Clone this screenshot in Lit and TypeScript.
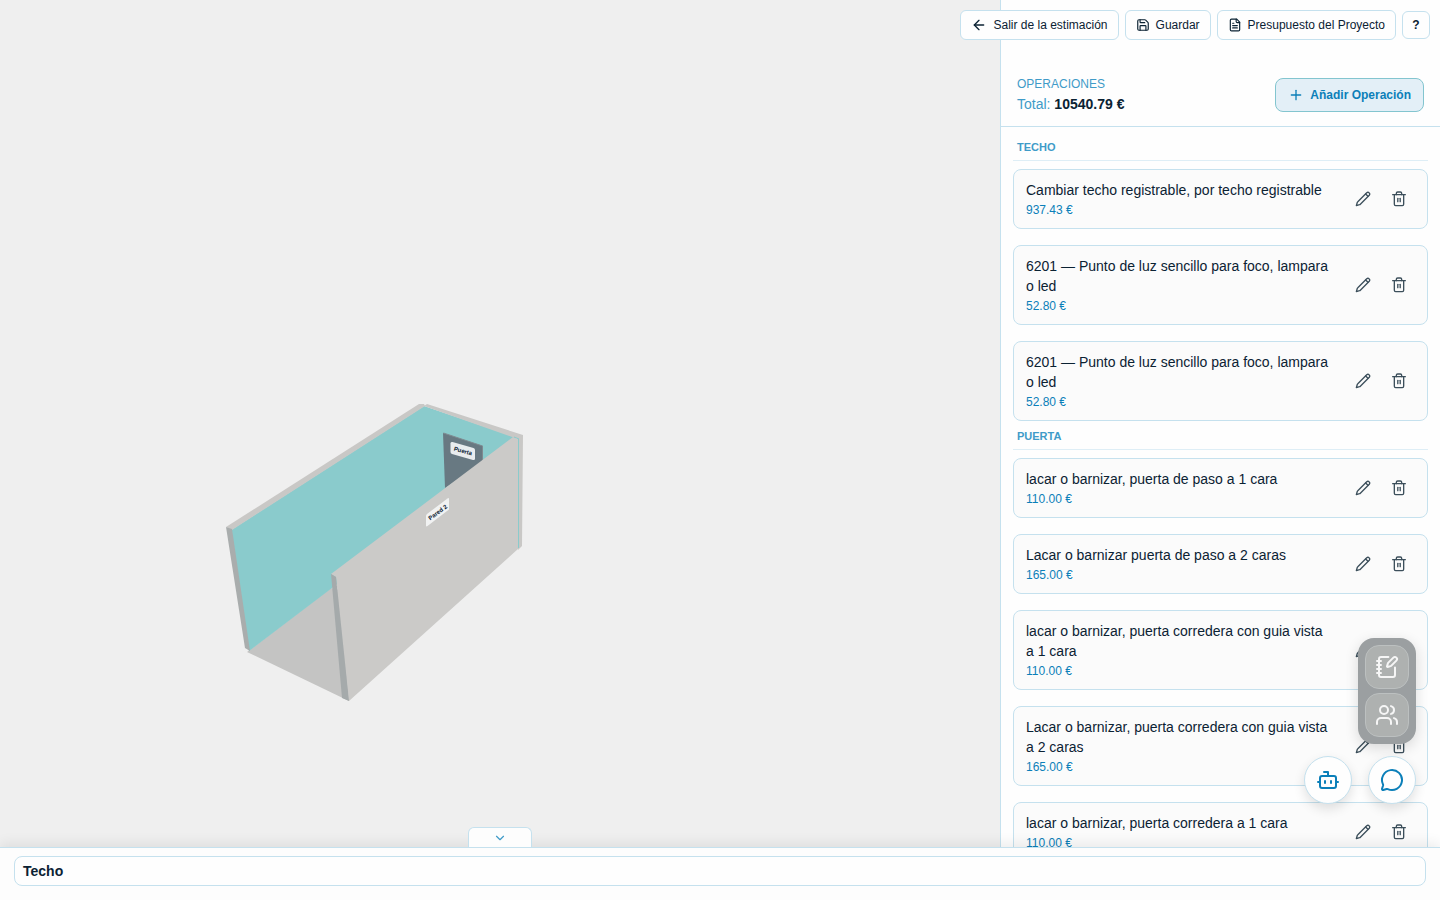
import { LitElement, html, svg, css, nothing } from "lit";
import { customElement, property } from "lit/decorators.js";

const shapes: Record<string, unknown> = {
  back: svg`<path d="m12 19-7-7 7-7"/><path d="M19 12H5"/>`,
  save: svg`<path d="M15.2 3a2 2 0 0 1 1.4.6l3.8 3.8a2 2 0 0 1 .6 1.4V19a2 2 0 0 1-2 2H5a2 2 0 0 1-2-2V5a2 2 0 0 1 2-2z"/><path d="M17 21v-7a1 1 0 0 0-1-1H8a1 1 0 0 0-1 1v7"/><path d="M7 3v4a1 1 0 0 0 1 1h7"/>`,
  file: svg`<path d="M15 2H6a2 2 0 0 0-2 2v16a2 2 0 0 0 2 2h12a2 2 0 0 0 2-2V7Z"/><path d="M14 2v4a2 2 0 0 0 2 2h4"/><path d="M10 9H8"/><path d="M16 13H8"/><path d="M16 17H8"/>`,
  plus: svg`<path d="M5 12h14"/><path d="M12 5v14"/>`,
  pencil: svg`<path d="M17.6 2.6a2.7 2.7 0 0 1 3.8 3.8L8 19.8a3 3 0 0 1-1.2.8L2 22l1.400-4.800a3 3 0 0 1 .8-1.200Z"/><path d="m16 4.500 3.500 3.500"/>`,
  trash: svg`<path d="M2.500 5.500h19"/><path d="M19 5.500V20a2 2 0 0 1-2 2H7a2 2 0 0 1-2-2V5.500"/><path d="M8 5.500V3.500a2 2 0 0 1 2-2h4a2 2 0 0 1 2 2v2"/><path d="M10.200 11v5"/><path d="M13.800 11v5"/>`,
  notebook: svg`<path d="M13.4 2H6a2 2 0 0 0-2 2v16a2 2 0 0 0 2 2h12a2 2 0 0 0 2-2v-7.4"/><path d="M2 6h4"/><path d="M2 10h4"/><path d="M2 14h4"/><path d="M2 18h4"/><path d="M21.378 5.626a1 1 0 1 0-3.004-3.004l-5.01 5.012a2 2 0 0 0-.506.854l-.837 2.87a.5.5 0 0 0 .62.62l2.87-.837a2 2 0 0 0 .854-.506z"/>`,
  users: svg`<path d="M16 21v-2a4 4 0 0 0-4-4H6a4 4 0 0 0-4 4v2"/><circle cx="9" cy="7" r="4"/><path d="M22 21v-2a4 4 0 0 0-3-3.87"/><path d="M16 3.13a4 4 0 0 1 0 7.75"/>`,
  bot: svg`<path d="M12 8V4H8"/><rect width="16" height="12" x="4" y="8" rx="2"/><path d="M2 14h2"/><path d="M20 14h2"/><path d="M15 13v2"/><path d="M9 13v2"/>`,
  chat: svg`<path d="M2.992 16.342a2 2 0 0 1 .094 1.167l-1.065 3.29a1 1 0 0 0 1.236 1.168l3.413-.998a2 2 0 0 1 1.099.092 10 10 0 1 0-4.777-4.719"/>`,
  down: svg`<path d="m6 9 6 6 6-6"/>`,
};

const icon = (name: string, size = 16) => html`<svg
  width=${size} height=${size} viewBox="0 0 24 24" fill="none" stroke="currentColor"
  stroke-width="2" stroke-linecap="round" stroke-linejoin="round" aria-hidden="true"
>${shapes[name]}</svg>`;

const reset = css`
  *, *::before, *::after { box-sizing: border-box; }
  button {
    font: inherit;
    color: inherit;
    background: none;
    border: 0;
    margin: 0;
    padding: 0;
    cursor: pointer;
  }
  svg { display: block; flex: none; }
`;

@customElement("room-view")
class RoomView extends LitElement {
  static styles = css`
    :host { display: block; background: #efefef; }
    .canvas { display: block; width: 100%; height: 100%; }
    .tag { font-size: 6px; font-weight: 700; fill: #0b2233; text-anchor: middle; }
  `;
  render() {
    return html`<svg class="canvas" viewBox="0 0 1000 847" role="img" aria-label="Vista 3D">
      <polygon points="247,652 331,588 340,590 349,701" fill="#c4c4c3"/>
      <polygon points="231,530 424,406 515,437 515,450 332,588 249,651" fill="#8acbcc"/>
      <polygon points="226,527 419,404 424,404 425,406 232,530" fill="#c9c8c6"/>
      <polygon points="424,406 427,404 523,435 522,546 518,550 518,439" fill="#c9c8c6"/>
      <polygon points="226,527 232,529 250,651 245,648" fill="#a9adad"/>
      <polygon points="443,433 483,446 483,463 445,488" fill="#687982"/>
      <polyline points="443.5,433 482.5,446 482.5,461" fill="none" stroke="#7f8a90"/>
      <polygon points="331,574 513,437 518,439 518,549 349,701 336,577" fill="#cbcac8"/>
      <polygon points="331,574 336,577 349,701 342,698" fill="#a5aaab"/>
      <path d="M514 437L519 439M518.500 439V548" stroke="#8acbcc" fill="none"/>
      <path d="M452.500 442L473.500 448Q475 448.500 475 450V458.500Q475 460.500 473 460L452 454Q450.500 453.500 450.500 452V443.500Q450.500 441.500 452.500 442Z" fill="#e9edef"/>
      <path d="M427 514L447.500 498.500Q449 497.500 449 499V509.500L427.500 526Q426 527 426 525.500V516Q426 515 427 514Z" fill="#f1f2f2"/>
      <text class="tag" transform="translate(462.500 453) rotate(15)">Puerta</text>
      <text class="tag" transform="translate(439 514) rotate(-37)">Pared 2</text>
    </svg>`;
  }
}

@customElement("operation-card")
class OperationCard extends LitElement {
  @property() name = "";
  @property() price = "";
  static styles = [reset, css`
    :host {
      display: flex;
      align-items: center;
      gap: 16px;
      padding: 10px 12px;
      background: #fbfbfb;
      border: 1px solid #c5e1ee;
      border-radius: 8px;
    }
    .body { flex: 1; min-width: 0; display: grid; gap: 2px; }
    .name { font-size: 14px; line-height: 20px; color: #0b2233; }
    .price { font-size: 12px; line-height: 16px; color: #0b7fb9; }
    .actions { display: flex; gap: 4px; color: #3c4f5b; }
    .action { width: 32px; height: 32px; display: grid; place-items: center; }
  `];
  render() {
    return html`
      <div class="body">
        <div class="name">${this.name}</div>
        <div class="price">${this.price} €</div>
      </div>
      <div class="actions">
        <button class="action" aria-label="Editar">${icon("pencil")}</button>
        <button class="action" aria-label="Eliminar">${icon("trash")}</button>
      </div>`;
  }
}

const groups = [
  { title: "TECHO", items: [
    ["Cambiar techo registrable, por techo registrable", "937.43"],
    ["6201 — Punto de luz sencillo para foco, lampara o led", "52.80"],
    ["6201 — Punto de luz sencillo para foco, lampara o led", "52.80"],
  ] },
  { title: "PUERTA", items: [
    ["lacar o barnizar, puerta de paso a 1 cara", "110.00"],
    ["Lacar o barnizar puerta de paso a 2 caras", "165.00"],
    ["lacar o barnizar, puerta corredera con guia vista a 1 cara", "110.00"],
    ["Lacar o barnizar, puerta corredera con guia vista a 2 caras", "165.00"],
    ["lacar o barnizar, puerta corredera a 1 cara", "110.00"],
  ] },
];

@customElement("app-root")
class AppRoot extends LitElement {
  static styles = [reset, css`
    :host {
      display: flex;
      flex-direction: column;
      height: 100vh;
      position: relative;
      overflow: hidden;
      font-family: "Liberation Sans", Arial, sans-serif;
      font-size: 12px;
      line-height: 16px;
      color: #0b2233;
      background: #fdfdfd;
    }
    .main { flex: 1; min-height: 0; display: flex; }
    .stage { flex: 1; min-width: 0; position: relative; display: flex; }
    .stage room-view { flex: 1; min-width: 0; }
    .panel {
      width: 440px;
      display: flex;
      flex-direction: column;
      border-left: 1px solid #c5e1ee;
      background: #fefefe;
    }
    .head {
      display: flex;
      align-items: center;
      justify-content: space-between;
      padding: 76px 16px 12px;
      border-bottom: 1px solid #c5e1ee;
    }
    .summary { display: grid; gap: 2px; color: #3f9bc8; }
    .caption { margin: 0; font-size: 12px; font-weight: 400; line-height: 16px; }
    .total { font-size: 14px; line-height: 20px; }
    .total strong { color: #0b2233; }
    .add {
      display: flex;
      align-items: center;
      gap: 6px;
      height: 34px;
      padding: 0 12px;
      border: 1px solid #83c5cf;
      border-radius: 8px;
      background: #e3eff7;
      color: #0b7fb9;
      font-weight: 700;
    }
    .list {
      flex: 1;
      min-height: 0;
      overflow: hidden auto;
      scrollbar-width: none;
      padding: 12px 12px 0;
      display: flex;
      flex-direction: column;
      gap: 7px;
    }
    .group { flex: none; }
    .group-title {
      margin: 0 0 8px;
      padding: 0 4px 5px;
      border-bottom: 1px solid #deeef6;
      font-size: 11px;
      line-height: 16px;
      font-weight: 700;
      color: #3f9bc8;
    }
    .cards { display: grid; gap: 16px; }
    .topbar {
      position: absolute;
      top: 10px;
      right: 10px;
      display: flex;
      align-items: center;
      gap: 6px;
    }
    .tool {
      display: flex;
      align-items: center;
      justify-content: center;
      gap: 6px;
      height: 30px;
      padding: 0 10px;
      border: 1px solid #c5e1ee;
      border-radius: 6px;
      background: #fefefe;
    }
    .help { width: 28px; height: 28px; padding: 0; font-weight: 700; }
    .toggle {
      position: absolute;
      bottom: 0;
      left: 50%;
      transform: translateX(-50%);
      width: 64px;
      height: 20px;
      display: grid;
      place-items: center;
      border: 1px solid #c5e1ee;
      border-bottom: 0;
      border-radius: 6px 6px 0 0;
      background: #fdfdfd;
      color: #3f9bc8;
      z-index: 2;
    }
    .footer {
      position: relative;
      z-index: 1;
      padding: 8px 14px 14px;
      border-top: 1px solid #c5e1ee;
      background: #fdfdfd;
      box-shadow: 0 -4px 12px rgba(0, 0, 0, 0.07);
    }
    .section {
      display: block;
      width: 100%;
      padding: 4px 8px;
      border: 1px solid #c5e1ee;
      border-radius: 8px;
      background: #fefefe;
      font-size: 14px;
      line-height: 20px;
      font-weight: 700;
      text-align: left;
    }
    .floating {
      position: absolute;
      z-index: 2;
      right: 24px;
      bottom: 96px;
      display: flex;
      flex-direction: column;
      align-items: flex-end;
      gap: 12px;
    }
    .dock {
      display: grid;
      gap: 4px;
      padding: 7px;
      border-radius: 16px;
      background: #9b9fa1;
      box-shadow: 0 4px 14px rgba(0, 0, 0, 0.14);
    }
    .dock-item {
      width: 44px;
      height: 44px;
      display: grid;
      place-items: center;
      border: 1px solid #bcc0c0;
      border-radius: 14px;
      background: #aeb1b0;
      color: #f6f6f6;
    }
    .bubbles { display: flex; gap: 16px; }
    .bubble {
      width: 48px;
      height: 48px;
      display: grid;
      place-items: center;
      border: 1px solid #c5e1ee;
      border-radius: 50%;
      background: #fefefe;
      color: #0b7fb9;
      box-shadow: 0 5px 12px rgba(0, 0, 0, 0.12);
    }
  `];

  private tool(label: string, name: string, size: number) {
    return html`<button class="tool">${name ? icon(name, size) : nothing}${label}</button>`;
  }

  render() {
    return html`
      <main class="main">
        <section class="stage">
          <room-view></room-view>
          <button class="toggle" aria-label="Ocultar">${icon("down", 14)}</button>
        </section>
        <aside class="panel">
          <header class="head">
            <div class="summary">
              <h1 class="caption">OPERACIONES</h1>
              <div class="total">Total: <strong>10540.79 €</strong></div>
            </div>
            <button class="add">${icon("plus")}Añadir Operación</button>
          </header>
          <div class="list">
            ${groups.map((g) => html`<section class="group">
              <h2 class="group-title">${g.title}</h2>
              <div class="cards">
                ${g.items.map(([name, price]) => html`<operation-card .name=${name} .price=${price}></operation-card>`)}
              </div>
            </section>`)}
          </div>
        </aside>
      </main>
      <footer class="footer"><button class="section">Techo</button></footer>
      <nav class="topbar">
        ${this.tool("Salir de la estimación", "back", 16)}
        ${this.tool("Guardar", "save", 14)}
        ${this.tool("Presupuesto del Proyecto", "file", 14)}
        <button class="tool help">?</button>
      </nav>
      <div class="floating">
        <div class="dock">
          <button class="dock-item" aria-label="Notas">${icon("notebook", 24)}</button>
          <button class="dock-item" aria-label="Usuarios">${icon("users", 24)}</button>
        </div>
        <div class="bubbles">
          <button class="bubble" aria-label="Asistente">${icon("bot", 24)}</button>
          <button class="bubble" aria-label="Chat">${icon("chat", 24)}</button>
        </div>
      </div>`;
  }
}
